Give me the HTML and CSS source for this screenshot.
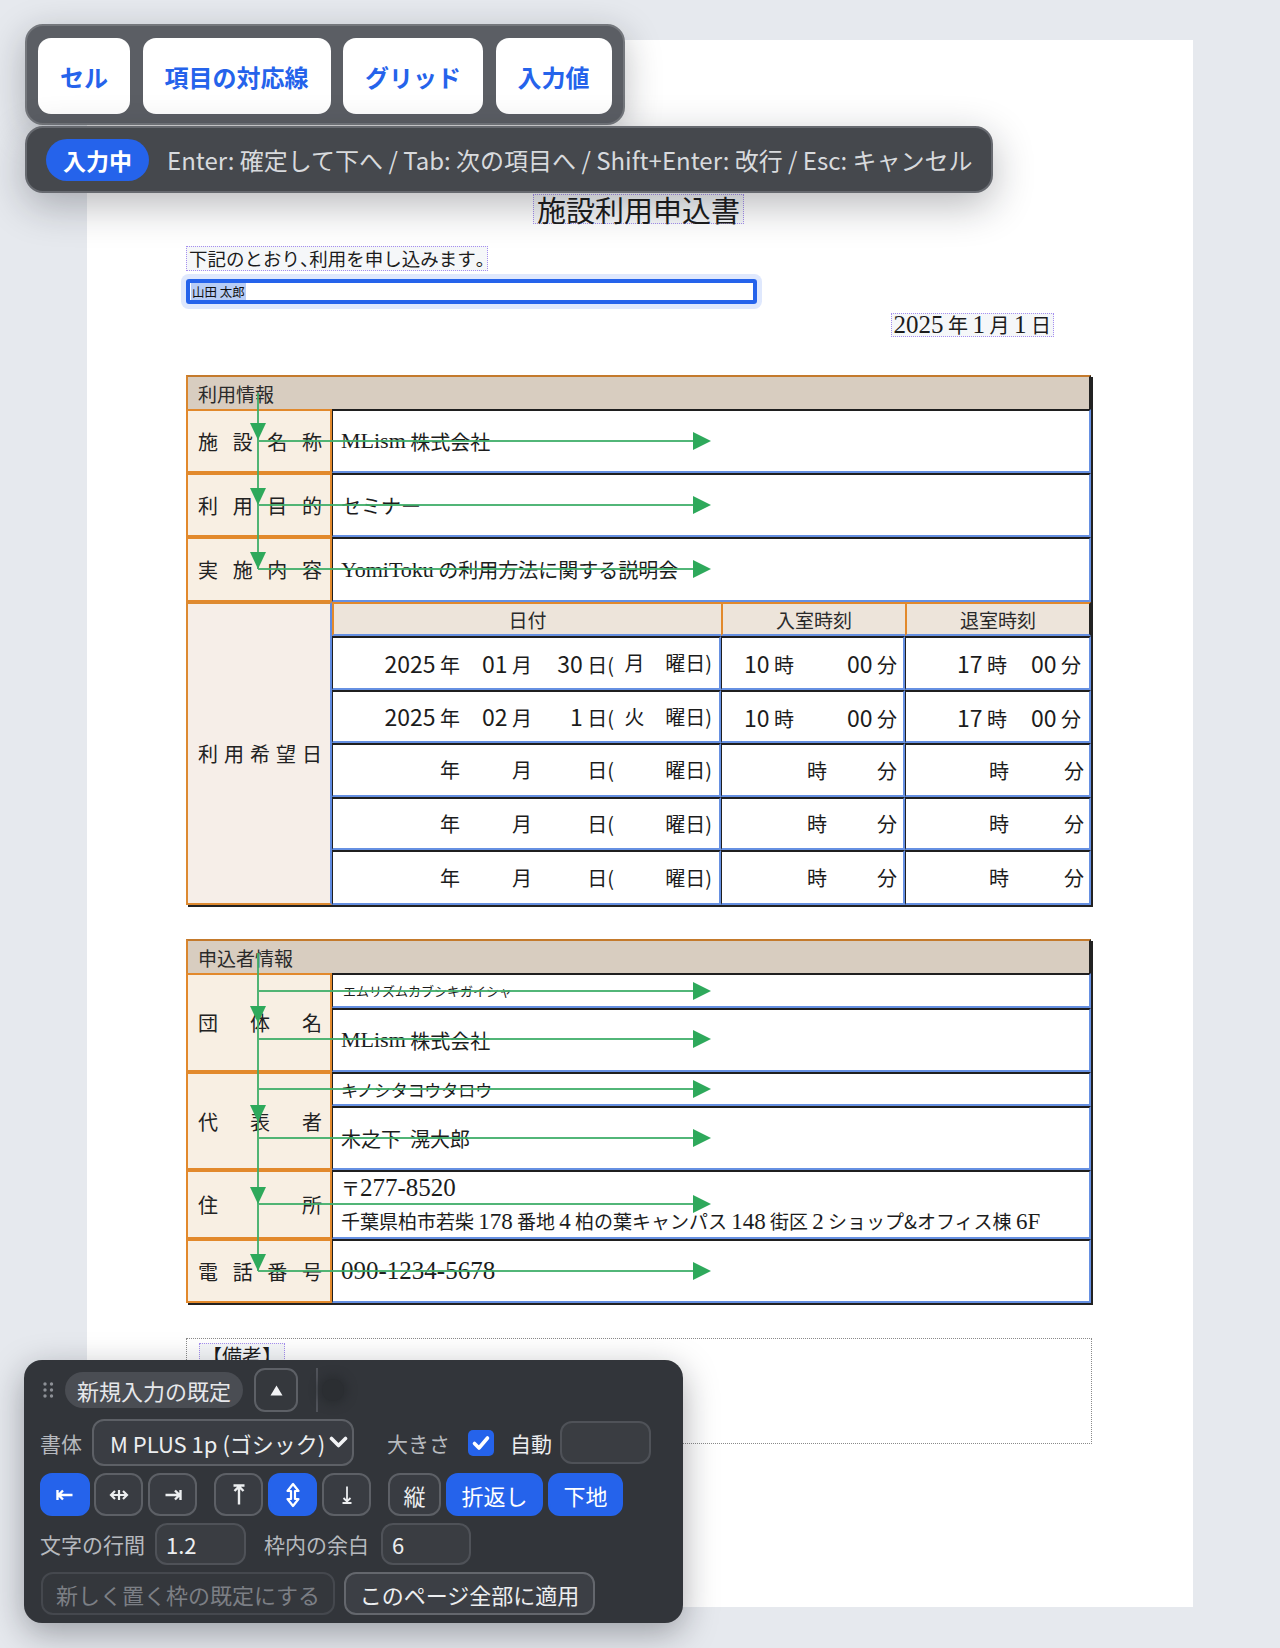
FILE: index.html
```html
<!DOCTYPE html>
<html lang="ja">
<head>
<meta charset="utf-8">
<title>施設利用申込書</title>
<link rel="stylesheet" href="styles.css">
</head>
<body>
<div class="stage">
  <div class="page">
    <div class="doc">
      <div class="title-row"><div class="title box-dot">施設利用申込書</div></div>
      <div class="intro box-dot">下記のとおり<span class="hp">、</span>利用を申し込みます<span class="hp">。</span></div>
      <div class="editing"><span class="sel">山田 太郎</span></div>
      <div class="date-row"><div class="date box-dot"><span class="n">2025</span> 年 <span class="n">1</span> 月 <span class="n">1</span> 日</div></div>

      <div class="tbl t1">
        <div class="hd">利用情報</div>
        <div class="lb"><span>施</span><span>設</span><span>名</span><span>称</span></div>
        <div class="vl span3"><span class="l">MLism</span>&nbsp;株式会社</div>
        <div class="lb"><span>利</span><span>用</span><span>目</span><span>的</span></div>
        <div class="vl span3">セミナー</div>
        <div class="lb"><span>実</span><span>施</span><span>内</span><span>容</span></div>
        <div class="vl span3"><span class="l">YomiToku</span>&nbsp;の利用方法に関する説明会</div>
        <div class="lb tall"><span>利</span><span>用</span><span>希</span><span>望</span><span>日</span></div>
        <div class="ch">日付</div>
        <div class="ch">入室時刻</div>
        <div class="ch ch-last">退室時刻</div>

        <div class="vl dc"><span><span class="ns">2025</span> 年</span><span><span class="ns">01</span> 月</span><span><span class="ns">30</span> 日(</span><span class="wd">月</span><span>曜日)</span></div>
        <div class="vl ti"><span><span class="ns">10</span> 時</span><span><span class="ns">00</span> 分</span></div>
        <div class="vl to"><span><span class="ns">17</span> 時</span><span><span class="ns">00</span> 分</span></div>

        <div class="vl dc"><span><span class="ns">2025</span> 年</span><span><span class="ns">02</span> 月</span><span><span class="ns">1</span> 日(</span><span class="wd">火</span><span>曜日)</span></div>
        <div class="vl ti"><span><span class="ns">10</span> 時</span><span><span class="ns">00</span> 分</span></div>
        <div class="vl to"><span><span class="ns">17</span> 時</span><span><span class="ns">00</span> 分</span></div>

        <div class="vl dc"><span>年</span><span>月</span><span>日(</span><span class="wd"></span><span>曜日)</span></div>
        <div class="vl te"><span>時</span><span class="u2">分</span></div>
        <div class="vl toe"><span>時</span><span class="u2">分</span></div>

        <div class="vl dc"><span>年</span><span>月</span><span>日(</span><span class="wd"></span><span>曜日)</span></div>
        <div class="vl te"><span>時</span><span class="u2">分</span></div>
        <div class="vl toe"><span>時</span><span class="u2">分</span></div>

        <div class="vl dc"><span>年</span><span>月</span><span>日(</span><span class="wd"></span><span>曜日)</span></div>
        <div class="vl te"><span>時</span><span class="u2">分</span></div>
        <div class="vl toe"><span>時</span><span class="u2">分</span></div>
      </div>

      <div class="tbl t2">
        <div class="hd">申込者情報</div>
        <div class="lb span2"><span>団</span><span>体</span><span>名</span></div>
        <div class="vl furi">エムリズムカブシキガイシャ</div>
        <div class="vl"><span class="l">MLism</span>&nbsp;株式会社</div>
        <div class="lb span2"><span>代</span><span>表</span><span>者</span></div>
        <div class="vl furi2">キノシタコウタロウ</div>
        <div class="vl">木之下&nbsp;&nbsp;滉大郎</div>
        <div class="lb"><span>住</span><span>所</span></div>
        <div class="vl addr">
          <div>〒<span class="n">277-8520</span></div>
          <div>千葉県柏市若柴 <span class="n2">178</span> 番地 <span class="n2">4</span> 柏の葉キャンパス <span class="n2">148</span> 街区 <span class="n2">2</span> ショップ&amp;オフィス棟 <span class="n2">6F</span></div>
        </div>
        <div class="lb"><span>電</span><span>話</span><span>番</span><span>号</span></div>
        <div class="vl"><span class="n">090-1234-5678</span></div>
      </div>

      <div class="remarks"><span class="rm box-dot">【備考】</span></div>
    </div>

    <svg class="links" width="1106" height="1567" viewBox="0 0 1106 1567">
      <g stroke="#3fae69" stroke-width="2" fill="none" opacity="0.9">
        <path d="M171 353V529"/>
        <path d="M171 401H607M171 465H607M171 529H607"/>
        <path d="M171 913V1231"/>
        <path d="M171 951H607M171 999H607M171 1049H607M171 1098H607M171 1164H607M171 1231H607"/>
      </g>
      <g fill="#2ea95b">
        <polygon points="163,383 179,383 171,400"/>
        <polygon points="163,448 179,448 171,465"/>
        <polygon points="163,512 179,512 171,529"/>
        <polygon points="163,966 179,966 171,983"/>
        <polygon points="163,1065 179,1065 171,1082"/>
        <polygon points="163,1147 179,1147 171,1164"/>
        <polygon points="163,1214 179,1214 171,1231"/>
        <polygon points="606,392 606,410 624,401"/>
        <polygon points="606,456 606,474 624,465"/>
        <polygon points="606,520 606,538 624,529"/>
        <polygon points="606,942 606,960 624,951"/>
        <polygon points="606,990 606,1008 624,999"/>
        <polygon points="606,1040 606,1058 624,1049"/>
        <polygon points="606,1089 606,1107 624,1098"/>
        <polygon points="606,1155 606,1173 624,1164"/>
        <polygon points="606,1222 606,1240 624,1231"/>
      </g>
    </svg>
  </div>
</div>

<div class="toolbar">
  <div class="tbtn">セル</div>
  <div class="tbtn">項目の対応線</div>
  <div class="tbtn">グリッド</div>
  <div class="tbtn">入力値</div>
</div>

<div class="status">
  <div class="badge">入力中</div>
  <div class="hint">Enter: 確定して下へ / Tab: 次の項目へ / Shift+Enter: 改行 / Esc: キャンセル</div>
</div>

<div class="panel">
  <div class="prow r1">
    <svg class="grip" width="11" height="16" viewBox="0 0 11 16"><g fill="#8d9096"><circle cx="2" cy="2" r="1.7"/><circle cx="8.5" cy="2" r="1.7"/><circle cx="2" cy="8" r="1.7"/><circle cx="8.5" cy="8" r="1.7"/><circle cx="2" cy="14" r="1.7"/><circle cx="8.5" cy="14" r="1.7"/></g></svg>
    <span class="pill">新規入力の既定</span>
    <span class="sq"><svg width="13" height="11" viewBox="0 0 13 11"><polygon points="6.5,0.5 12.5,10.5 0.5,10.5" fill="#f2f3f5"/></svg></span>
    <span class="vsep"></span>
    <span class="blob"></span>
  </div>
  <div class="prow r2">
    <span class="plab">書体</span>
    <span class="selbox">M PLUS 1p (ゴシック)<svg width="19" height="13" viewBox="0 0 19 13"><path d="M2.5 2.5L9.5 9.5L16.5 2.5" stroke="#f2f3f5" stroke-width="3.6" fill="none" stroke-linecap="round" stroke-linejoin="round"/></svg></span>
    <span class="plab m-size">大きさ</span>
    <span class="chk"><svg width="26" height="26" viewBox="0 0 26 26"><path d="M6.5 13.5L11 18L19.5 8" stroke="#fff" stroke-width="3.6" fill="none" stroke-linecap="round" stroke-linejoin="round"/></svg></span>
    <span class="plab2">自動</span>
    <span class="inp inp-size"></span>
  </div>
  <div class="prow r3">
    <span class="ib on w50"><svg width="20" height="14" viewBox="0 0 20 14"><path d="M2.5 2v10M3.5 7h14M8 2.5L3.5 7 8 11.5" stroke="#fff" stroke-width="2.4" fill="none"/></svg></span>
    <span class="ib w49 m4"><svg width="20" height="14" viewBox="0 0 20 14"><path d="M10 2v10M2 7h16M6 3L2 7l4 4M14 3l4 4-4 4" stroke="#eceef0" stroke-width="2.2" fill="none"/></svg></span>
    <span class="ib w49 m5"><svg width="20" height="14" viewBox="0 0 20 14"><path d="M17.5 2v10M2.5 7h14M12 2.5L16.5 7 12 11.5" stroke="#eceef0" stroke-width="2.4" fill="none"/></svg></span>
    <span class="ib w49 m17"><svg width="16" height="24" viewBox="0 0 16 24"><path d="M2.5 2.5h11M8 3.5v18M3.5 8L8 3.5 12.5 8" stroke="#eceef0" stroke-width="2.4" fill="none"/></svg></span>
    <span class="ib on w49 m5"><svg width="16" height="26" viewBox="0 0 16 26"><path d="M8 2L2.5 9h3.5v8H2.5L8 24l5.5-7H10V9h3.5z" stroke="#fff" stroke-width="2.2" fill="none" stroke-linejoin="round"/></svg></span>
    <span class="ib w49 m5"><svg width="14" height="20" viewBox="0 0 14 20"><path d="M2.5 18h9M7 1.5v15M3.5 13L7 16.5 10.5 13" stroke="#eceef0" stroke-width="1.8" fill="none"/></svg></span>
    <span class="ib w53 m17">縦</span>
    <span class="ib on w97 m5">折返し</span>
    <span class="ib on w75 m5">下地</span>
  </div>
  <div class="prow r4">
    <span class="plab">文字の行間</span>
    <span class="inp inp-lh">1.2</span>
    <span class="plab m-pad">枠内の余白</span>
    <span class="inp inp-pad">6</span>
  </div>
  <div class="prow r5">
    <span class="pbtn dis">新しく置く枠の既定にする</span>
    <span class="pbtn act">このページ全部に適用</span>
  </div>
</div>
</body>
</html>
```

FILE: styles.css
```css
* { box-sizing: border-box; }
html, body { margin: 0; padding: 0; }
body {
  width: 1280px;
  height: 1648px;
  overflow: hidden;
  position: relative;
  background: #e6e9ee;
  font-family: "Noto Sans CJK JP", "Noto Sans", sans-serif;
}

/* ---------- document page ---------- */
.stage { padding: 40px 0 0 87px; }
.page {
  position: relative;
  width: 1106px;
  height: 1567px;
  background: #fff;
  color: #1c1c1c;
}
.doc {
  margin-left: 99px;
  width: 905px;
  padding-top: 154px;
  display: flex;
  flex-direction: column;
  align-items: flex-start;
}
.box-dot {
  border: 1px dotted #a58ef0;
  background: rgba(120, 140, 170, 0.07);
}
.title-row { align-self: stretch; display: flex; justify-content: center; }
.title {
  height: 30px;
  padding: 0 3px;
  font-size: 29px;
  line-height: 28px;
  white-space: nowrap;
}
.intro {
  margin-top: 22px;
  height: 25px;
  padding: 0 2px;
  font-size: 18.5px;
  line-height: 23px;
  white-space: nowrap;
}
.hp { font-feature-settings: "halt"; }
.editing {
  margin-top: 8px;
  width: 571px;
  height: 25px;
  border: 4px solid #2563eb;
  border-radius: 3px;
  box-shadow: 0 0 0 5px #dfe8fd;
  display: flex;
  align-items: center;
  padding-left: 1px;
}
.sel {
  background: #b7cdf6;
  font-size: 12.5px;
  line-height: 17px;
  color: #111;
  padding: 0 1px;
}
.date-row {
  align-self: stretch;
  display: flex;
  justify-content: flex-end;
  padding-right: 37px;
  margin-top: 9px;
}
.date {
  height: 24px;
  padding: 0 2px;
  font-size: 20px;
  line-height: 22px;
  white-space: nowrap;
}
.n { font-family: "Liberation Serif", serif; font-size: 25px; }
.n2 { font-family: "Liberation Serif", serif; font-size: 23px; }
.l { font-family: "Liberation Serif", serif; font-size: 22px; }
.ns { font-family: "Noto Sans CJK JP", sans-serif; font-size: 23px; }

/* ---------- tables ---------- */
.tbl {
  display: grid;
  box-shadow: 2px 2px 0 #222;
  font-size: 20px;
}
.t1 {
  margin-top: 38px;
  grid-template-columns: 146px 389px 184px 186px;
  grid-template-rows: 34px 64px 64px 65px 34px 54px 53px 54px 53px 55px;
}
.t2 {
  margin-top: 34px;
  grid-template-columns: 146px 759px;
  grid-template-rows: 34px 35px 64px 34px 64px 69px 64px;
}
.hd {
  grid-column: 1 / -1;
  background: #d8cdc0;
  border-top: 2px solid #c47a2c;
  border-left: 2px solid #d9862e;
  border-right: 2px solid #222;
  display: flex;
  align-items: center;
  padding-left: 10px;
  font-size: 19px;
  color: #2a2a2a;
}
.lb {
  background: #f8efe3;
  border: 2px solid #e2892c;
  display: flex;
  justify-content: space-between;
  align-items: center;
  padding: 0 8px 0 10px;
  font-size: 20px;
  color: #222;
}
.span2 { grid-row: span 2; }
.tall {
  grid-column: 1;
  grid-row: 5 / span 6;
  background: #f6eee8;
  border-color: #dd8a31;
  border-right-color: #5f8ae0;
}
.vl {
  background: #fff;
  border-top: 2px solid #1f1f1f;
  border-left: 1px solid #1f1f1f;
  border-right: 2px solid #6690e2;
  border-bottom: 2px solid #6690e2;
  display: flex;
  align-items: center;
  padding-left: 8px;
  white-space: nowrap;
}
.span3 { grid-column: 2 / -1; }
.ch {
  background: #ede4da;
  border-top: 2px solid #e2892c;
  border-left: 2px solid #e2892c;
  border-bottom: 2px solid #6690e2;
  display: flex;
  align-items: center;
  justify-content: center;
  font-size: 19px;
  color: #2a2a2a;
}
.ch-last { border-right: 2px solid #222; }

.dc {
  display: grid;
  grid-template-columns: 127px 72px 82px 41px 57px;
  align-items: center;
  padding-left: 0;
  line-height: 1;
}
.dc > span { text-align: right; }
.dc > .wd { text-align: center; }
.ti { justify-content: space-between; padding: 0 6px 0 22px; }
.to { justify-content: space-between; padding: 0 8px 0 51px; }
.te { justify-content: flex-end; padding-right: 6px; }
.te .u2 { margin-left: 50px; }
.toe { justify-content: flex-end; padding-right: 5px; }
.toe .u2 { margin-left: 55px; }

.furi { font-size: 13px; padding-left: 10px; align-items: center; }
.furi2 { font-size: 17px; }
.addr {
  flex-direction: column;
  align-items: flex-start;
  justify-content: center;
  line-height: 33px;
  font-size: 19px;
}

.remarks {
  margin-top: 35px;
  width: 906px;
  height: 106px;
  border: 1px dotted #8a8a8a;
  padding: 4px 0 0 12px;
}
.rm {
  display: inline-block;
  font-size: 20px;
  line-height: 24px;
  padding: 0 2px;
}

.links {
  position: absolute;
  left: 0;
  top: 0;
  pointer-events: none;
}

/* ---------- top toolbar ---------- */
.toolbar {
  position: absolute;
  left: 25px;
  top: 24px;
  height: 101px;
  display: flex;
  align-items: flex-start;
  gap: 12.5px;
  padding: 12px 11px 0;
  background: #5b5e64;
  border: 2px solid #74777c;
  border-radius: 18px;
  box-shadow: 0 10px 36px rgba(20, 24, 32, 0.28);
}
.tbtn {
  height: 76px;
  padding: 0 22px;
  background: #fff;
  border-radius: 13px;
  color: #2563eb;
  font-weight: 700;
  font-size: 24px;
  display: flex;
  align-items: center;
  white-space: nowrap;
}
.status {
  position: absolute;
  left: 25px;
  top: 126px;
  width: 968px;
  height: 67px;
  display: flex;
  align-items: center;
  padding-left: 19px;
  background: #45484d;
  border: 2px solid #676a70;
  border-radius: 18px;
  box-shadow: 0 12px 40px rgba(20, 24, 32, 0.3);
}
.badge {
  height: 42px;
  width: 103px;
  border-radius: 21px;
  background: #2563eb;
  color: #fff;
  font-weight: 700;
  font-size: 23px;
  display: flex;
  align-items: center;
  justify-content: center;
}
.hint {
  margin-left: 18px;
  color: #d8dadd;
  font-size: 24px;
  white-space: nowrap;
}

/* ---------- bottom panel ---------- */
.panel {
  position: absolute;
  left: 24px;
  top: 1360px;
  width: 659px;
  height: 263px;
  padding: 8px 0 0 16px;
  background: #32353a;
  border-radius: 18px;
  box-shadow: 0 10px 34px rgba(15, 18, 25, 0.35);
  display: flex;
  flex-direction: column;
  gap: 7px;
  color: #e8eaed;
}
.prow { display: flex; align-items: center; white-space: nowrap; }
.r1 { height: 44px; }
.grip { margin-left: 3px; }
.pill {
  margin-left: 11px;
  height: 36px;
  padding: 0 12px;
  border-radius: 18px;
  background: #4a4d53;
  font-size: 22px;
  display: flex;
  align-items: center;
  color: #e6e7ea;
}
.sq {
  margin-left: 11px;
  width: 44px;
  height: 44px;
  border: 2px solid #5d6066;
  border-radius: 11px;
  background: #35383d;
  display: flex;
  align-items: center;
  justify-content: center;
}
.vsep { margin-left: 18px; width: 2px; height: 44px; background: #50535a; }
.blob {
  margin-left: 4px;
  width: 22px;
  height: 22px;
  border-radius: 50%;
  background: #2b2e32;
  box-shadow: 0 0 8px 4px #2b2e32;
}
.r2 { height: 47px; }
.plab { font-size: 21px; color: #b6b9be; }
.plab2 { font-size: 21px; color: #eceef0; margin-left: 16px; }
.selbox {
  margin-left: 10px;
  width: 262px;
  height: 47px;
  border: 2px solid #5d6066;
  border-radius: 12px;
  background: #3a3d43;
  display: flex;
  align-items: center;
  gap: 4px;
  padding-left: 16px;
  font-size: 22px;
  color: #eceef0;
}
.m-size { margin-left: 33px; }
.chk {
  margin-left: 18px;
  width: 26px;
  height: 26px;
  border-radius: 5px;
  background: #2563eb;
  display: flex;
}
.inp {
  height: 43px;
  border: 2px solid #4f5258;
  border-radius: 12px;
  background: #3a3d42;
  display: flex;
  align-items: center;
  padding-left: 9px;
  font-size: 22px;
  color: #eceef0;
}
.inp-size { margin-left: 8px; width: 91px; }
.r3 { height: 43px; }
.ib {
  height: 43px;
  border: 2px solid #5d6066;
  border-radius: 12px;
  background: #393c42;
  display: flex;
  align-items: center;
  justify-content: center;
  font-size: 22px;
  color: #eceef0;
}
.ib.on { background: #2563eb; border-color: #2563eb; color: #fff; }
.w50 { width: 50px; }
.w49 { width: 49px; }
.w53 { width: 53px; }
.w97 { width: 97px; }
.w75 { width: 75px; }
.m4 { margin-left: 4px; }
.m5 { margin-left: 5px; }
.m17 { margin-left: 17px; }
.r4 { height: 42px; }
.inp-lh { margin-left: 10px; width: 91px; height: 42px; }
.m-pad { margin-left: 18px; }
.inp-pad { margin-left: 12px; width: 90px; height: 42px; }
.r5 { height: 43px; }
.pbtn {
  height: 43px;
  border-radius: 12px;
  display: flex;
  align-items: center;
  justify-content: center;
  font-size: 22px;
}
.dis {
  width: 294px;
  margin-left: 1px;
  border: 2px solid #45484e;
  background: #34373c;
  color: #7c7f85;
}
.act {
  width: 251px;
  margin-left: 9px;
  border: 2px solid #64676d;
  background: #3c3f45;
  color: #eceef0;
}
```
